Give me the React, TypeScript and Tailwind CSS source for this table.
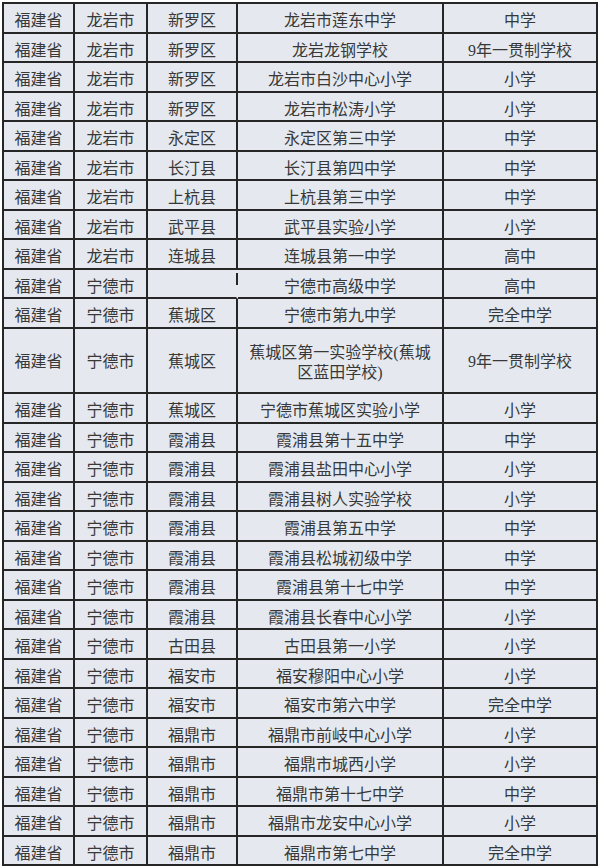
import React from "react";

type Row = [string, string, string, React.ReactNode, string];

const rows: Row[] = [
  ["福建省", "龙岩市", "新罗区", "龙岩市莲东中学", "中学"],
  ["福建省", "龙岩市", "新罗区", "龙岩龙钢学校", "9年一贯制学校"],
  ["福建省", "龙岩市", "新罗区", "龙岩市白沙中心小学", "小学"],
  ["福建省", "龙岩市", "新罗区", "龙岩市松涛小学", "小学"],
  ["福建省", "龙岩市", "永定区", "永定区第三中学", "中学"],
  ["福建省", "龙岩市", "长汀县", "长汀县第四中学", "中学"],
  ["福建省", "龙岩市", "上杭县", "上杭县第三中学", "中学"],
  ["福建省", "龙岩市", "武平县", "武平县实验小学", "小学"],
  ["福建省", "龙岩市", "连城县", "连城县第一中学", "高中"],
  ["福建省", "宁德市", "", "宁德市高级中学", "高中"],
  ["福建省", "宁德市", "蕉城区", "宁德市第九中学", "完全中学"],
  ["福建省", "宁德市", "蕉城区", "DOUBLE", "9年一贯制学校"],
  ["福建省", "宁德市", "蕉城区", "宁德市蕉城区实验小学", "小学"],
  ["福建省", "宁德市", "霞浦县", "霞浦县第十五中学", "中学"],
  ["福建省", "宁德市", "霞浦县", "霞浦县盐田中心小学", "小学"],
  ["福建省", "宁德市", "霞浦县", "霞浦县树人实验学校", "小学"],
  ["福建省", "宁德市", "霞浦县", "霞浦县第五中学", "中学"],
  ["福建省", "宁德市", "霞浦县", "霞浦县松城初级中学", "中学"],
  ["福建省", "宁德市", "霞浦县", "霞浦县第十七中学", "中学"],
  ["福建省", "宁德市", "霞浦县", "霞浦县长春中心小学", "小学"],
  ["福建省", "宁德市", "古田县", "古田县第一小学", "小学"],
  ["福建省", "宁德市", "福安市", "福安穆阳中心小学", "小学"],
  ["福建省", "宁德市", "福安市", "福安市第六中学", "完全中学"],
  ["福建省", "宁德市", "福鼎市", "福鼎市前岐中心小学", "小学"],
  ["福建省", "宁德市", "福鼎市", "福鼎市城西小学", "小学"],
  ["福建省", "宁德市", "福鼎市", "福鼎市第十七中学", "中学"],
  ["福建省", "宁德市", "福鼎市", "福鼎市龙安中心小学", "小学"],
  ["福建省", "宁德市", "福鼎市", "福鼎市第七中学", "完全中学"],
];

const widths = ["w-[71px]", "w-[73px]", "w-[90px]", "w-[206px]", "w-[154px]"];

export default function App() {
  return (
    <div
      className="w-[600px] h-[868px] bg-white pt-[2px] pl-[2px] overflow-hidden"
      style={{ fontFamily: '"Liberation Serif", "Noto Sans CJK SC", serif' }}
    >
      <div className="w-[596px] border-l-2 border-t-2 border-[#262626] bg-[#e5e9ef] text-[16px] text-[#383838]">
        {rows.map((r, i) => {
          const isDouble = r[3] === "DOUBLE";
          const missing = r[2] === "";
          return (
            <div key={i} className={`flex ${isDouble ? "h-[65.5px]" : "h-[29.5px]"}`}>
              {r.map((c, j) => {
                const noRight = missing && j === 2;
                return (
                  <div
                    key={j}
                    className={`relative ${widths[j]} shrink-0 flex items-center justify-center border-b-2 border-r-2 border-b-[#262626] ${
                      noRight ? "border-r-[#e5e9ef]" : "border-r-[#262626]"
                    } ${isDouble ? "pt-[3px]" : "pt-[7px]"} leading-[20px] whitespace-nowrap`}
                  >
                    {isDouble && j === 3 ? (
                      <span className="text-center leading-[20px] pt-[3px]">
                        蕉城区第一实验学校(蕉城
                        <br />
                        区蓝田学校)
                      </span>
                    ) : (
                      c
                    )}
                    {noRight && (
                      <span className="absolute right-[-2px] top-[3px] h-[12px] w-[2px] bg-[#262626]" />
                    )}
                  </div>
                );
              })}
            </div>
          );
        })}
      </div>
    </div>
  );
}
